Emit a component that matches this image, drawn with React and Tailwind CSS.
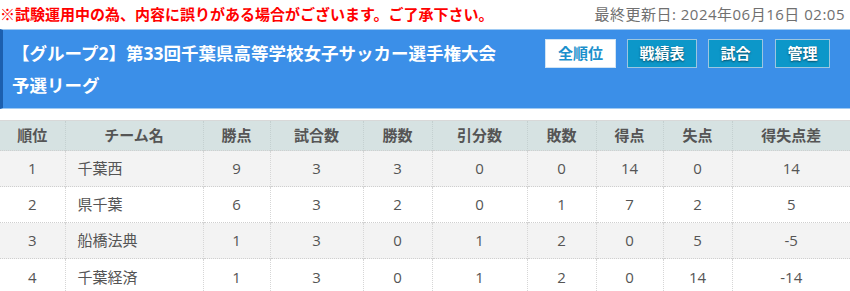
import React from "react";

const COLUMNS = [
  { key: "rank", label: "順位", width: 65 },
  { key: "team", label: "チーム名", width: 138 },
  { key: "points", label: "勝点", width: 67 },
  { key: "played", label: "試合数", width: 93 },
  { key: "won", label: "勝数", width: 69 },
  { key: "drawn", label: "引分数", width: 95 },
  { key: "lost", label: "敗数", width: 69 },
  { key: "gf", label: "得点", width: 67 },
  { key: "ga", label: "失点", width: 69 },
  { key: "gd", label: "得失点差", width: 118 },
];

const STANDINGS = [
  { rank: 1, team: "千葉西", points: 9, played: 3, won: 3, drawn: 0, lost: 0, gf: 14, ga: 0, gd: "14" },
  { rank: 2, team: "県千葉", points: 6, played: 3, won: 2, drawn: 0, lost: 1, gf: 7, ga: 2, gd: "5" },
  { rank: 3, team: "船橋法典", points: 1, played: 3, won: 0, drawn: 1, lost: 2, gf: 0, ga: 5, gd: "-5" },
  { rank: 4, team: "千葉経済", points: 1, played: 3, won: 0, drawn: 1, lost: 2, gf: 0, ga: 14, gd: "-14" },
];

const FONT = "font-['Open_Sans','Noto_Sans_CJK_JP',sans-serif]";

const App = () => {
  return (
    <div className={`w-[850px] bg-white ${FONT}`}>
      {/* お知らせ */}
      <div className="flex h-[29px] items-center justify-between pr-[5px]">
        <p className="m-0 text-[15px] font-bold leading-none text-[#ff0000]">
          ※試験運用中の為、内容に誤りがある場合がございます。ご了承下さい。
        </p>
        <p className="m-0 text-[15px] leading-none tracking-[0.5px] text-[#707070]">
          最終更新日: 2024年06月16日 02:05
        </p>
      </div>

      {/* 大会ヘッダー */}
      <div className="h-[80px] border-y border-l-[3px] border-y-[#9fcaf3] border-l-[#1c5fae] bg-[#3b8fe8] pt-[9px] pr-5 pl-[9px]">
        <div className="flex h-[29px] items-center justify-between">
          <h1 className="m-0 text-[17.5px] font-bold leading-none text-white">
            【グループ2】第33回千葉県高等学校女子サッカー選手権大会
          </h1>
          <div className="flex gap-[11px]">
            <button className="h-[29px] w-[71px] border border-[#d0e4f4] bg-white text-[15px] font-bold text-[#1b90cc]">
              全順位
            </button>
            <button className="h-[29px] w-[70px] border border-[#9cc6e0] bg-[#0c97c9] text-[15px] font-bold text-white [text-shadow:0_1px_2px_rgba(0,0,0,0.5)]">
              戦績表
            </button>
            <button className="h-[29px] w-[55px] border border-[#9cc6e0] bg-[#0c97c9] text-[15px] font-bold text-white [text-shadow:0_1px_2px_rgba(0,0,0,0.5)]">
              試合
            </button>
            <button className="ml-px h-[29px] w-[55px] border border-[#9cc6e0] bg-[#0c97c9] text-[15px] font-bold text-white [text-shadow:0_1px_2px_rgba(0,0,0,0.5)]">
              管理
            </button>
          </div>
        </div>
        <p className="m-0 mt-[5px] text-[17.5px] font-bold leading-6 text-white">
          予選リーグ
        </p>
      </div>

      {/* 順位表 */}
      <table className="mt-[11px] w-[850px] table-fixed border-collapse text-[15px] text-[#555]">
        <colgroup>
          {COLUMNS.map((col) => (
            <col key={col.key} style={{ width: col.width }} />
          ))}
        </colgroup>
        <thead>
          <tr className="h-[30px] border-t border-[#d8d8d8] bg-[#d6e2e2]">
            {COLUMNS.map((col, i) => (
              <th
                key={col.key}
                className={`p-0 text-center font-bold ${
                  i > 0 ? "border-l border-dotted border-l-[#c4d0d0]" : ""
                }`}
              >
                {col.label}
              </th>
            ))}
          </tr>
        </thead>
        <tbody>
          {STANDINGS.map((row, r) => (
            <tr
              key={row.rank}
              className={`h-[36px] ${r % 2 === 0 ? "bg-[#f3f3f3]" : "bg-white"}`}
            >
              {COLUMNS.map((col, i) => (
                <td
                  key={col.key}
                  className={`border-t border-dotted border-t-[#cfcfcf] p-0 ${
                    i > 0 ? "border-l border-l-[#d6d6d6]" : ""
                  } ${col.key === "team" ? "pl-3 text-left" : "text-center"}`}
                >
                  {row[col.key]}
                </td>
              ))}
            </tr>
          ))}
        </tbody>
      </table>
    </div>
  );
};

export default App;
